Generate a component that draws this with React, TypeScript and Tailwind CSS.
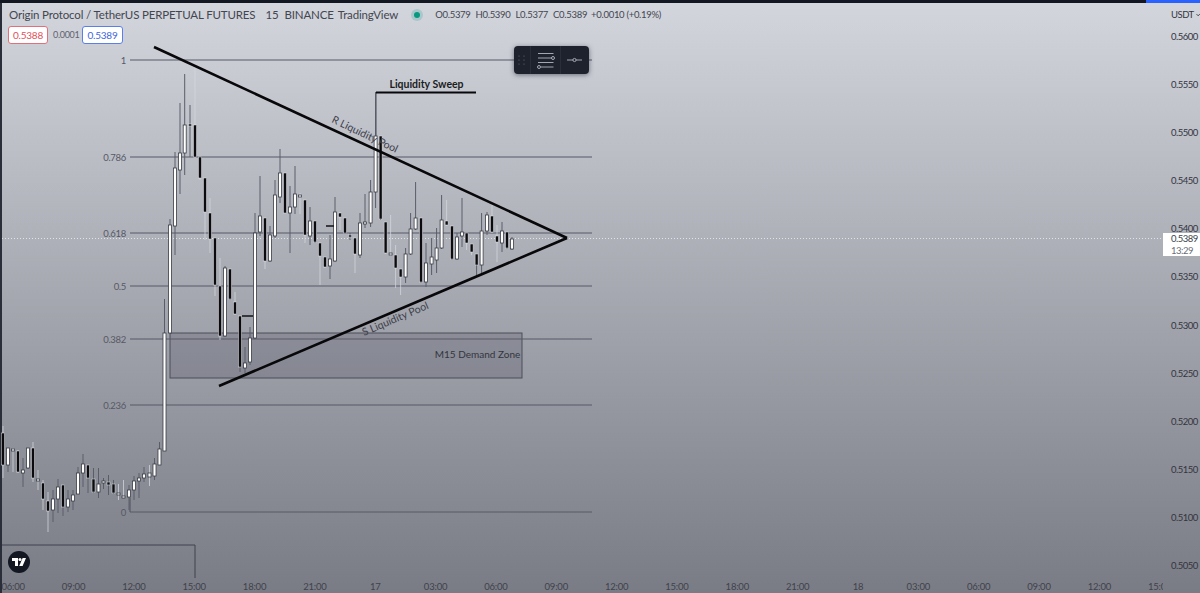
type Candle = [number, number, number, number, number, "w" | "b", number?];

const font = "font-['Lato','Liberation_Sans',sans-serif]";

// x, wick top, body top, body bottom, wick bottom, colour, 1 = pale wick
const candles: Candle[] = [
  [3, 426, 433, 465, 478, "b", 1], [8, 448, 448, 465, 472, "w"], [13, 448, 449, 451, 472, "w", 1],
  [18, 450, 451, 472, 473, "b", 1], [23, 458, 470, 473, 487, "w"], [28, 448, 448, 468, 469, "w"],
  [33, 442, 448, 478, 482, "b", 1], [38, 470, 479, 481, 490, "w", 1], [43, 480, 483, 499, 510, "b", 1],
  [48, 492, 501, 511, 532, "b", 1], [53, 490, 499, 510, 522, "w"], [58, 479, 487, 499, 513, "w"],
  [63, 485, 485, 507, 516, "b"], [68, 490, 499, 507, 512, "w"], [73, 490, 495, 501, 510, "w"],
  [78, 467, 473, 494, 494, "w"], [83, 454, 464, 473, 487, "w"], [88, 465, 465, 478, 493, "b"],
  [93.5, 468, 479, 492, 493, "b"], [98.5, 468, 484, 492, 498, "w"], [103.5, 478, 481, 483, 489, "w"],
  [108.5, 475, 482, 485, 495, "b"], [113.5, 480, 484, 493, 494, "b"], [118.5, 484, 493, 495, 500, "w", 1],
  [123.5, 480, 496, 498, 498, "w", 1], [129, 485, 490, 497, 510, "w"], [134, 476, 481, 490, 500, "w"],
  [139, 473, 478, 481, 498, "w"], [144, 467, 474, 478, 482, "w"], [149.5, 465, 473, 477, 486, "w", 1],
  [154.5, 458, 464, 476, 480, "w"], [159.5, 442, 449, 465, 465, "w"], [164.5, 299, 333, 451, 451, "w"],
  [170, 219, 225, 333, 333, "w"], [175, 152, 168, 226, 255, "w"], [180, 103, 153, 170, 194, "w"],
  [184.7, 74, 125, 153, 175, "w"], [190, 105, 124, 126, 157, "b"], [195, 67, 125, 157, 158, "b", 1],
  [200, 157, 157, 178, 180, "b", 1], [205, 178, 178, 212, 240, "b", 1], [210, 198, 213, 239, 253, "b", 1],
  [215, 238, 238, 285, 296, "b", 1], [220, 258, 286, 336, 340, "b", 1], [225, 266, 268, 336, 337, "w"],
  [230, 269, 269, 299, 300, "b"], [235, 292, 302, 314, 315, "b", 1], [240, 316, 316, 367, 372, "b"],
  [245, 347, 363, 368, 373, "w"], [250, 327, 338, 362, 365, "w"], [255, 213, 233, 338, 339, "w"],
  [260, 176, 216, 232, 236, "w"], [265, 218, 218, 261, 269, "b", 1], [270, 226, 235, 261, 262, "w"],
  [275, 180, 195, 236, 238, "w"], [280, 149, 173, 197, 203, "w"], [285, 173, 173, 213, 213, "b"],
  [290, 186, 207, 213, 253, "w"], [295, 166, 194, 207, 214, "w"], [300, 193, 195, 197, 214, "w", 1],
  [305, 200, 200, 235, 243, "b", 1], [310, 207, 221, 236, 245, "w"], [315, 221, 221, 242, 243, "b"],
  [320, 243, 243, 256, 285, "b", 1], [325, 257, 257, 267, 268, "b", 1], [330, 235, 259, 266, 279, "w"],
  [335, 197, 212, 261, 262, "w"], [340, 212, 213, 217, 230, "b", 1], [345, 218, 218, 233, 234, "b"],
  [350, 233, 235, 237, 240, "b"], [355, 238, 238, 254, 273, "b", 1], [360, 213, 223, 255, 258, "w"],
  [365, 194, 222, 224, 228, "w"], [370.6, 180, 192, 223, 227, "w"], [375.6, 92, 136, 192, 208, "w"],
  [380.6, 136, 136, 219, 220, "b"], [385.6, 222, 222, 253, 254, "b", 1], [390.6, 215, 253, 255, 256, "w", 1],
  [395.6, 245, 255, 268, 288, "b", 1], [400.6, 269, 269, 277, 295, "b", 1], [405.6, 248, 254, 277, 283, "w"],
  [410.6, 213, 229, 254, 255, "w"], [415.6, 182, 218, 229, 230, "w"], [421, 218, 218, 282, 283, "b"],
  [426, 243, 263, 282, 287, "w"], [431.6, 238, 257, 264, 275, "w"], [436.6, 228, 248, 260, 273, "w"],
  [441.6, 195, 220, 248, 249, "w"], [446.6, 200, 221, 225, 226, "b", 1], [452, 226, 226, 259, 260, "b"],
  [457, 233, 237, 259, 260, "w"], [462, 198, 232, 236, 247, "w"], [466.6, 233, 233, 243, 250, "b", 1],
  [471.6, 244, 244, 252, 255, "b", 1], [476.6, 254, 254, 265, 277, "b"], [481.6, 213, 231, 265, 273, "w"],
  [487, 212, 215, 231, 235, "w"], [492, 205, 216, 232, 233, "b", 1], [497, 225, 236, 242, 262, "b", 1],
  [502, 222, 231, 243, 252, "w"], [507, 232, 232, 248, 249, "b"], [512, 237, 239, 249, 250, "w"],
];

const fibs: [string, number][] = [
  ["1", 60], ["0.786", 157], ["0.618", 233], ["0.5", 286], ["0.382", 339], ["0.236", 405], ["0", 512],
];

const prices = ["0.5600", "0.5550", "0.5500", "0.5450", "0.5400", "0.5350", "0.5300", "0.5250", "0.5200", "0.5150", "0.5100", "0.5050"];
const times = ["06:00", "09:00", "12:00", "15:00", "18:00", "21:00", "17", "03:00", "06:00", "09:00", "12:00", "15:00", "18:00", "21:00", "18", "03:00", "06:00", "09:00", "12:00", "15:00"];

function ChartDrawing() {
  return (
    <svg width={1161} height={572} viewBox="2 3 1161 572" className={`absolute inset-0 overflow-visible ${font}`}>
      <rect x={170} y={333} width={352} height={45} fill="#3f4250" fillOpacity={0.22} stroke="#4a4d58" strokeWidth={1} />
      <line x1={2} x2={1163} y1={238.5} y2={238.5} stroke="#eef0f4" strokeWidth={1} strokeDasharray="1 2" opacity={0.8} />
      {fibs.map(([label, y]) => (
        <g key={label}>
          <line x1={130} x2={592} y1={y} y2={y} stroke="#565a66" strokeWidth={1.2} />
          <text x={126} y={y + 3.5} textAnchor="end" fontSize={9.5} letterSpacing={-0.3} fill="#555965">{label}</text>
        </g>
      ))}
      <line x1={130} x2={130} y1={498} y2={512} stroke="#565a66" strokeWidth={1.2} />
      <path d="M2 545H195V578" fill="none" stroke="#3f434e" strokeWidth={1} />

      {candles.map(([x, wt, t, b, wb, c, pale], i) => (
        <g key={i}>
          <line x1={x} x2={x} y1={wt} y2={wb} stroke={pale ? "#d6d8df" : "#5a5d68"} strokeWidth={1} opacity={pale ? 0.75 : 1} />
          <rect
            x={x - 1.5}
            y={t}
            width={3}
            height={b - t}
            fill={c === "w" ? "#ffffff" : "#0b0b0e"}
            stroke={c === "w" ? "#3a3c45" : "#e4e6ec"}
            strokeWidth={c === "w" ? 0.8 : 0.5}
          />
        </g>
      ))}
      <line x1={242} x2={253} y1={316} y2={316} stroke="#1a1b20" strokeWidth={1.6} />
      <line x1={326} x2={334} y1={226} y2={226} stroke="#1a1b20" strokeWidth={1.6} />

      <line x1={154} y1={47} x2={567} y2={238} stroke="#08080a" strokeWidth={2.6} />
      <line x1={219} y1={386} x2={567} y2={238} stroke="#08080a" strokeWidth={2.6} />
      <path d="M376 136V92" fill="none" stroke="#50535e" strokeWidth={1} />
      <path d="M376 92.5H476" fill="none" stroke="#08080a" strokeWidth={2} />

      <text x={426.5} y={88} textAnchor="middle" fontSize={10.5} fontWeight={700} fill="#1b1c22">Liquidity Sweep</text>
      <text x={477.5} y={358} textAnchor="middle" fontSize={10} fill="#33353e">M15 Demand Zone</text>
      <text x={0} y={0} transform="translate(331 122) rotate(25.5)" fontSize={10.5} fill="#3d404a">R Liquidity Pool</text>
      <text x={0} y={0} transform="translate(364 336) rotate(-23)" fontSize={10.5} fill="#3d404a">S Liquidity Pool</text>
    </svg>
  );
}

function FloatingToolbar() {
  return (
    <div className="absolute left-[512px] top-[43px] flex h-[28px] w-[75px] rounded-[4px] bg-[#1e222d] shadow-[0_1px_5px_rgba(30,34,45,0.55)]">
      <div className="flex w-[17px] items-center justify-center border-r border-[#2a2e39]">
        <svg width={8} height={10} viewBox="0 0 8 10">
          {[1, 5, 9].flatMap((y) => [1, 6].map((x) => <circle key={`${x}-${y}`} cx={x} cy={y} r={0.6} fill="#6a6f7c" />))}
        </svg>
      </div>
      <div className="flex w-[30px] items-center justify-center border-r border-[#2a2e39]">
        <svg width={20} height={18} viewBox="0 0 20 18" fill="none" stroke="#b2b5be" strokeWidth={0.9}>
          <path d="M2 2.5H17.5M2 7H16M2 11.5H17.5M5 16H17.5" />
          <circle cx={17} cy={7} r={1.5} fill="#1e222d" />
          <circle cx={3} cy={16} r={1.5} fill="#1e222d" />
        </svg>
      </div>
      <div className="flex flex-1 items-center justify-center">
        <svg width={18} height={6} viewBox="0 0 18 6" fill="none" stroke="#b2b5be" strokeWidth={0.9}>
          <path d="M1 3H16" />
          <circle cx={8.5} cy={3} r={1.6} fill="#1e222d" />
        </svg>
      </div>
    </div>
  );
}

function Legend() {
  return (
    <div className="absolute left-[7px] top-[4px] text-[#43464f]">
      <div className="flex h-[16px] items-center whitespace-nowrap text-[11.5px] leading-none tracking-[-0.15px]">
        <span>Origin Protocol / TetherUS PERPETUAL FUTURES</span>
        <span className="ml-[10px]">15</span>
        <span className="ml-[6px]">BINANCE</span>
        <span className="ml-[4px]">TradingView</span>
        <span className="ml-[16px] h-[6px] w-[6px] rounded-full bg-[#089981] shadow-[0_0_0_3px_rgba(8,153,129,0.2)]" />
        <span className="ml-[15px] text-[9.5px] tracking-[-0.3px]">O0.5379</span>
        <span className="ml-[5px] text-[9.5px] tracking-[-0.3px]">H0.5390</span>
        <span className="ml-[5px] text-[9.5px] tracking-[-0.3px]">L0.5377</span>
        <span className="ml-[5px] text-[9.5px] tracking-[-0.3px]">C0.5389</span>
        <span className="ml-[4px] text-[9.5px] tracking-[-0.3px]">+0.0010 (+0.19%)</span>
      </div>
      <div className="-ml-[1px] mt-[3px] flex items-center">
        <div className="flex h-[18px] w-[40px] items-center justify-center rounded-[3px] border border-[#e2707a] bg-white text-[10px] tracking-[-0.2px] text-[#e0505a]">0.5388</div>
        <div className="ml-[5px] w-[29px] text-[9px] tracking-[-0.3px] text-[#60636e]">0.0001</div>
        <div className="flex h-[18px] w-[41px] items-center justify-center rounded-[3px] border border-[#5a7fe8] bg-white text-[10px] tracking-[-0.2px] text-[#3d66dc]">0.5389</div>
      </div>
    </div>
  );
}

function PriceAxis() {
  return (
    <div className="relative w-[37px] shrink-0 pl-[8px] text-[9.5px] tracking-[-0.5px] text-[#33353e]">
      <div className="mt-[4px] flex h-[16px] items-center gap-[2px] leading-none">
        USDT
        <svg width={5} height={4} viewBox="0 0 5 4" fill="none" stroke="#33353e" strokeWidth={0.9}><path d="M0.5 0.8L2.5 3L4.5 0.8" /></svg>
      </div>
      <div className="mt-[6px] flex flex-col gap-[33.1px]">
        {prices.map((p) => (
          <div key={p} className="h-[15px] leading-[15px]">{p}</div>
        ))}
      </div>
      <div className="absolute left-0 top-[230px] flex h-[23px] w-[37px] flex-col bg-white pl-[8px] leading-[11.5px] text-[#3d3f49]">
        <span>0.5389</span>
        <span className="text-[#6b6e79]">13:29</span>
      </div>
    </div>
  );
}

export default function App() {
  return (
    <div className={`flex h-[593px] w-[1200px] flex-col overflow-hidden bg-linear-to-b from-[#d4d6de] to-[#7a7c85] ${font}`}>
      <div className="flex h-[3px] shrink-0 bg-[#131722]">
        <div className="ml-auto w-[54px] bg-[#2962ff]" />
      </div>
      <div className="flex min-h-0 flex-1">
        <div className="w-[2px] shrink-0 bg-[#2a2e39]" />
        <div className="flex min-h-0 flex-1 flex-col">
          <div className="flex min-h-0 flex-1">
            <div className="relative flex-1">
              <ChartDrawing />
              <Legend />
              <FloatingToolbar />
              <div className="absolute left-[6px] top-[548px] flex h-[22px] w-[22px] items-center justify-center rounded-full bg-[#131722]">
                <svg width={14} height={8} viewBox="0 0 14 8" fill="#ffffff">
                  <path d="M0 0H6V8H3V3H0Z" />
                  <circle cx={8} cy={1.5} r={1.5} />
                  <path d="M10.6 0H14L10.6 8H7.2Z" />
                </svg>
              </div>
            </div>
            <PriceAxis />
          </div>
          <div className="h-[18px] w-[1161px] shrink-0 overflow-hidden pt-[5px] text-[9.5px] leading-[13px] tracking-[-0.2px] text-[#3f424c]">
            <div className="-ml-[19px] flex">
              {times.map((t, i) => (
                <div key={i} className="w-[60.35px] shrink-0 text-center">{t}</div>
              ))}
            </div>
          </div>
        </div>
      </div>
    </div>
  );
}
